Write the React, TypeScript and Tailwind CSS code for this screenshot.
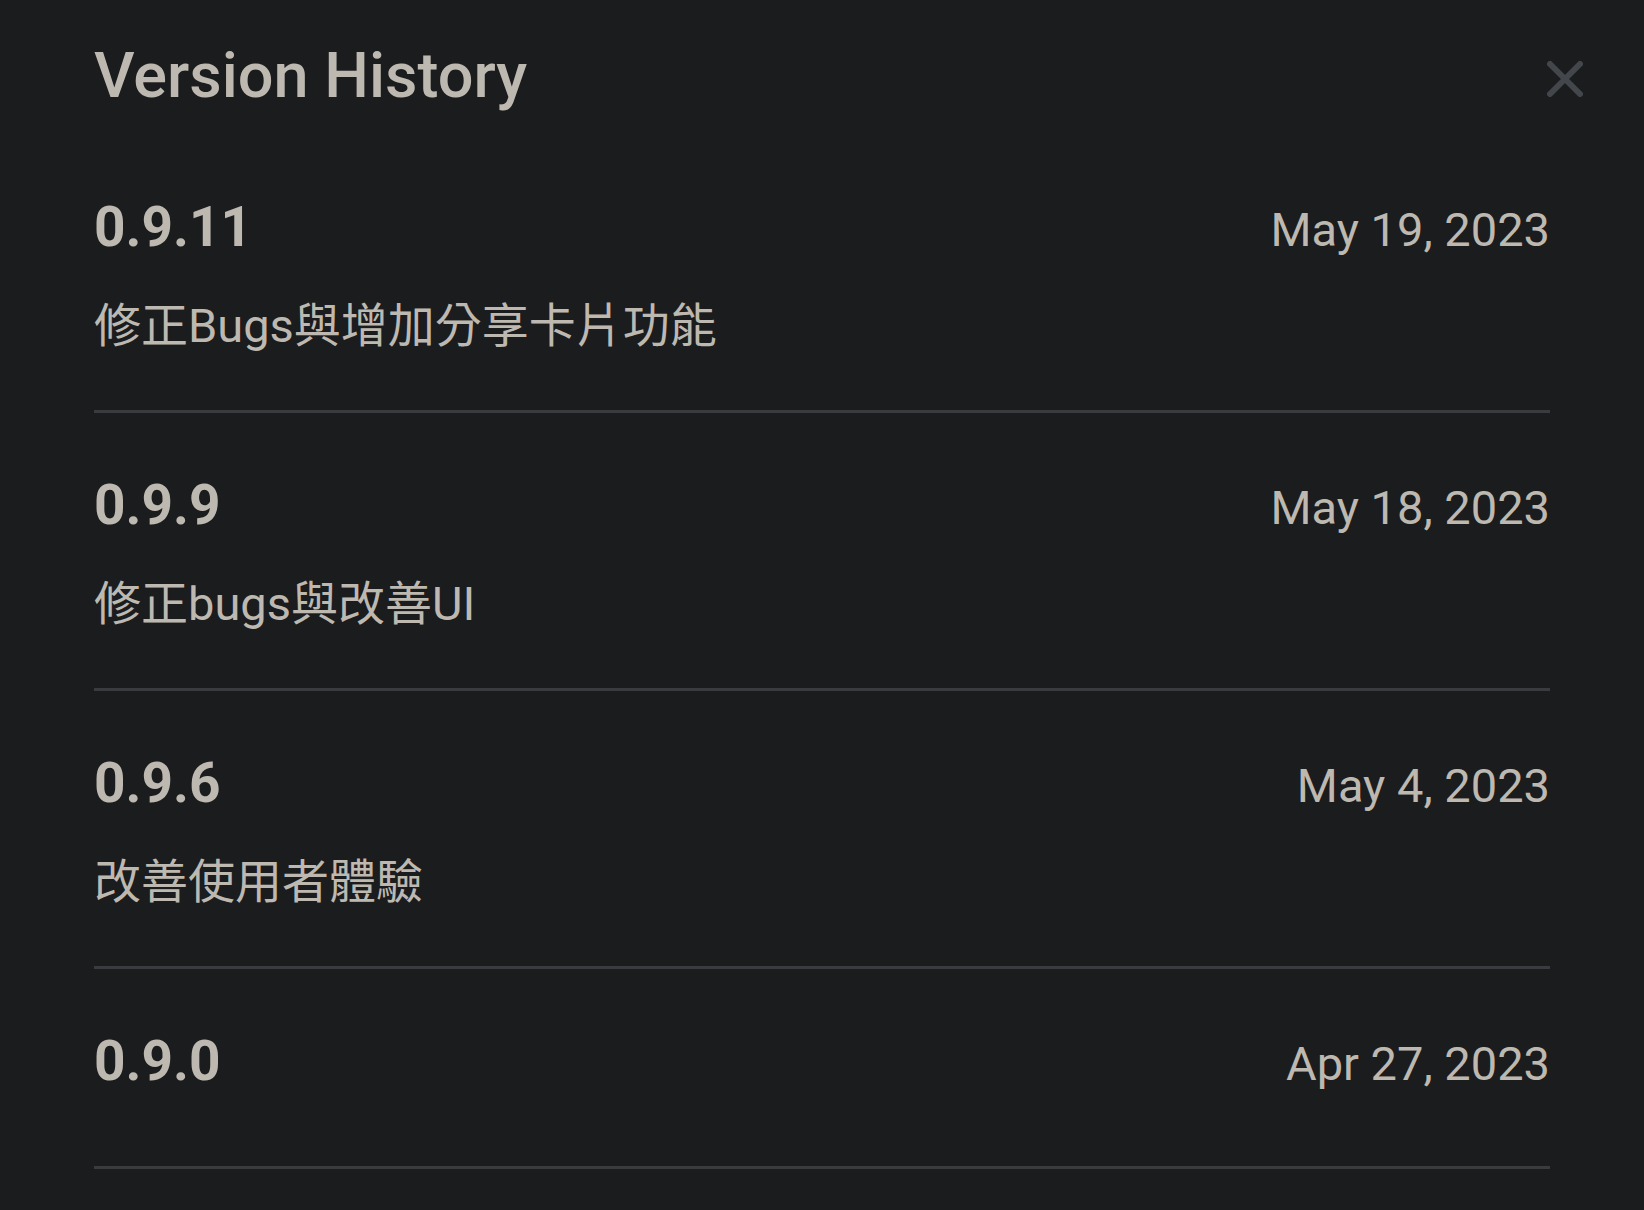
import React from 'react'

type Version = {
  version: string
  date: string
  note?: string
}

const versions: Version[] = [
  { version: '0.9.11', date: 'May 19, 2023', note: '修正Bugs與增加分享卡片功能' },
  { version: '0.9.9', date: 'May 18, 2023', note: '修正bugs與改善UI' },
  { version: '0.9.6', date: 'May 4, 2023', note: '改善使用者體驗' },
  { version: '0.9.0', date: 'Apr 27, 2023' },
]

const CloseIcon = () => (
  <svg width="36" height="36" viewBox="0 0 36 36" fill="none">
    <path d="M3 3L33 33M33 3L3 33" stroke="#43464a" strokeWidth={6} strokeLinecap="round" />
  </svg>
)

const VersionRow = ({ item }: { item: Version }) => (
  <div className="pt-[59px] pb-[56px] border-b-[3px] border-[#393b3e]">
    <div className="flex items-baseline justify-between mb-[16px]">
      <span className="text-[55px] leading-[66px] font-bold">{item.version}</span>
      <span className="text-[47px] leading-[56px]">{item.date}</span>
    </div>
    {item.note && (
      <p className="mt-[38px] text-[47px] leading-[56px]">{item.note}</p>
    )}
  </div>
)

export default function App() {
  return (
    <div
      className="min-h-screen w-full bg-[#1b1c1e] text-[#bdb8b0]"
      style={{ fontFamily: 'Roboto, "Noto Sans CJK TC", sans-serif' }}
    >
      <header className="flex items-center justify-between pl-[94px] pr-[61px] pt-[39px] pb-[22px]">
        <h1 className="text-[63px] leading-[74px] font-medium">Version History</h1>
        <button className="mt-[6px] flex items-center justify-center">
          <CloseIcon />
        </button>
      </header>
      <div className="px-[94px]">
        {versions.map((v) => (
          <VersionRow key={v.version} item={v} />
        ))}
      </div>
    </div>
  )
}
